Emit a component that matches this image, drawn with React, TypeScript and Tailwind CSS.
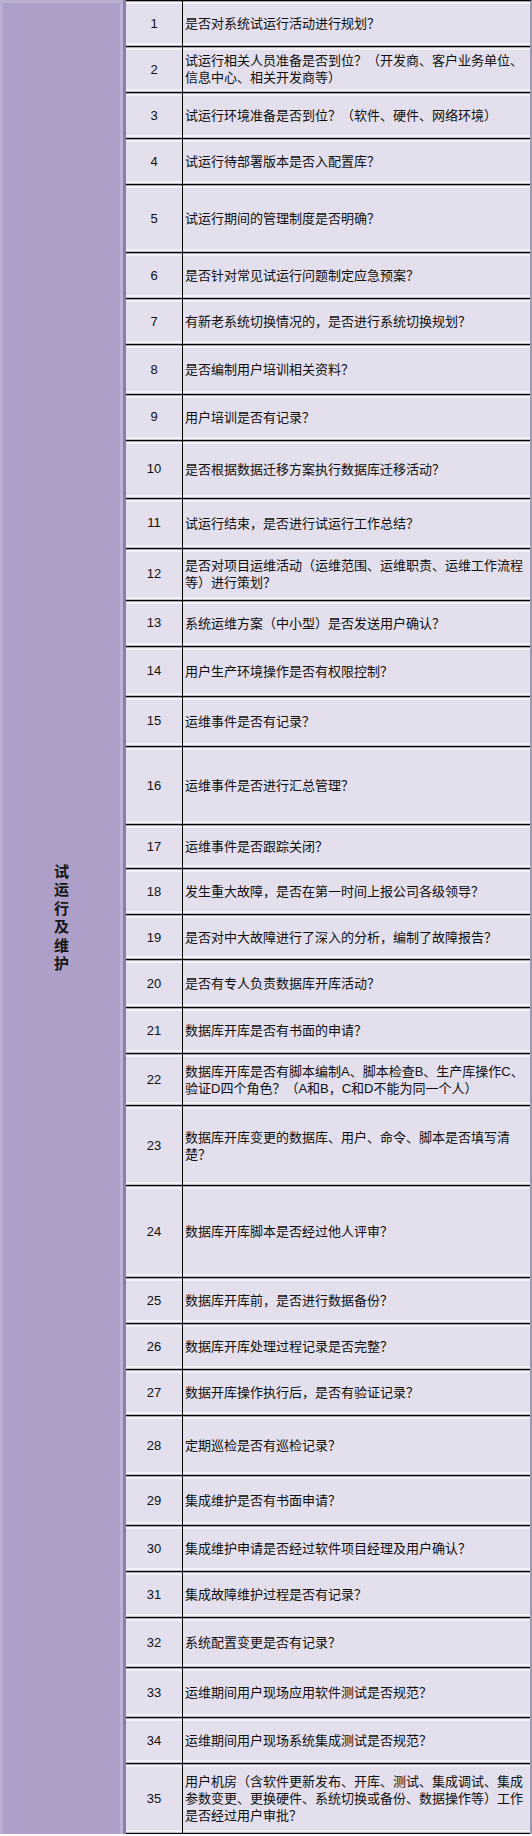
const rows: { n: number; text: string; h: string }[] = [
  { n: 1, text: "是否对系统试运行活动进行规划？", h: "h-[46px]" },
  { n: 2, text: "试运行相关人员准备是否到位？（开发商、客户业务单位、信息中心、相关开发商等）", h: "h-[46px]" },
  { n: 3, text: "试运行环境准备是否到位？（软件、硬件、网络环境）", h: "h-[46px]" },
  { n: 4, text: "试运行待部署版本是否入配置库？", h: "h-[46px]" },
  { n: 5, text: "试运行期间的管理制度是否明确？", h: "h-[68px]" },
  { n: 6, text: "是否针对常见试运行问题制定应急预案？", h: "h-[46px]" },
  { n: 7, text: "有新老系统切换情况的，是否进行系统切换规划？", h: "h-[46px]" },
  { n: 8, text: "是否编制用户培训相关资料？", h: "h-[50px]" },
  { n: 9, text: "用户培训是否有记录？", h: "h-[46px]" },
  { n: 10, text: "是否根据数据迁移方案执行数据库迁移活动？", h: "h-[58px]" },
  { n: 11, text: "试运行结束，是否进行试运行工作总结？", h: "h-[50px]" },
  { n: 12, text: "是否对项目运维活动（运维范围、运维职责、运维工作流程等）进行策划？", h: "h-[52px]" },
  { n: 13, text: "系统运维方案（中小型）是否发送用户确认？", h: "h-[46px]" },
  { n: 14, text: "用户生产环境操作是否有权限控制？", h: "h-[50px]" },
  { n: 15, text: "运维事件是否有记录？", h: "h-[50px]" },
  { n: 16, text: "运维事件是否进行汇总管理？", h: "h-[79px]" },
  { n: 17, text: "运维事件是否跟踪关闭？", h: "h-[44px]" },
  { n: 18, text: "发生重大故障，是否在第一时间上报公司各级领导？", h: "h-[46px]" },
  { n: 19, text: "是否对中大故障进行了深入的分析，编制了故障报告？", h: "h-[45px]" },
  { n: 20, text: "是否有专人负责数据库开库活动？", h: "h-[48px]" },
  { n: 21, text: "数据库开库是否有书面的申请？", h: "h-[46px]" },
  { n: 22, text: "数据库开库是否有脚本编制A、脚本检查B、生产库操作C、验证D四个角色？（A和B，C和D不能为同一个人）", h: "h-[52px]" },
  { n: 23, text: "数据库开库变更的数据库、用户、命令、脚本是否填写清楚？", h: "h-[80px]" },
  { n: 24, text: "数据库开库脚本是否经过他人评审？", h: "h-[92px]" },
  { n: 25, text: "数据库开库前，是否进行数据备份？", h: "h-[46px]" },
  { n: 26, text: "数据库开库处理过程记录是否完整？", h: "h-[46px]" },
  { n: 27, text: "数据开库操作执行后，是否有验证记录？", h: "h-[46px]" },
  { n: 28, text: "定期巡检是否有巡检记录？", h: "h-[60px]" },
  { n: 29, text: "集成维护是否有书面申请？", h: "h-[50px]" },
  { n: 30, text: "集成维护申请是否经过软件项目经理及用户确认？", h: "h-[46px]" },
  { n: 31, text: "集成故障维护过程是否有记录？", h: "h-[46px]" },
  { n: 32, text: "系统配置变更是否有记录？", h: "h-[50px]" },
  { n: 33, text: "运维期间用户现场应用软件测试是否规范？", h: "h-[50px]" },
  { n: 34, text: "运维期间用户现场系统集成测试是否规范？", h: "h-[46px]" },
  { n: 35, text: "用户机房（含软件更新发布、开库、测试、集成调试、集成参数变更、更换硬件、系统切换或备份、数据操作等）工作是否经过用户审批？", h: "h-[70px]" },
];

// light/grey bevel just inside each cell's black grid lines
const bevel =
  "shadow-[inset_0_1px_0_#aaa6b6,inset_0_3px_0_#f4f2f9,inset_0_-1px_0_#bdb9c9,inset_0_-3px_0_#f4f2f9]";

export default function App() {
  return (
    <div className="flex w-[532px] h-[1836px] bg-white font-['Liberation_Sans','Noto_Sans_CJK_SC',sans-serif] text-[#0f0f0f]">
      <div className="w-[126px] h-[1834px] flex items-center justify-center bg-[#ad9fc7] border-r-[3px] border-[#8c7ea8] shadow-[inset_3px_3px_0_#bbafd3,inset_-3px_0_0_#bdb2d5]">
        <div className="flex flex-col items-center text-[15px] leading-[18.5px] font-bold text-[#161616] font-['Noto_Sans_CJK_SC',sans-serif]">
          {"试运行及维护".split("").map((c) => (
            <span key={c}>{c}</span>
          ))}
        </div>
      </div>
      <div className="flex-1 h-[1834px] flex flex-col border-t border-black border-r-2 border-r-[#9e9aab]">
        {rows.map((r) => (
          <div key={r.n} className={`flex border-b border-black bg-[#e3dfed] ${r.h}`}>
            <div className={`w-[57px] shrink-0 flex items-center justify-center border-r border-black text-[13px] ${bevel}`}>
              {r.n}
            </div>
            <div className={`flex-1 flex items-center pl-[2px] pr-[2px] text-[13px] leading-[17px] ${bevel}`}>
              <p>{r.text}</p>
            </div>
          </div>
        ))}
      </div>
    </div>
  );
}
